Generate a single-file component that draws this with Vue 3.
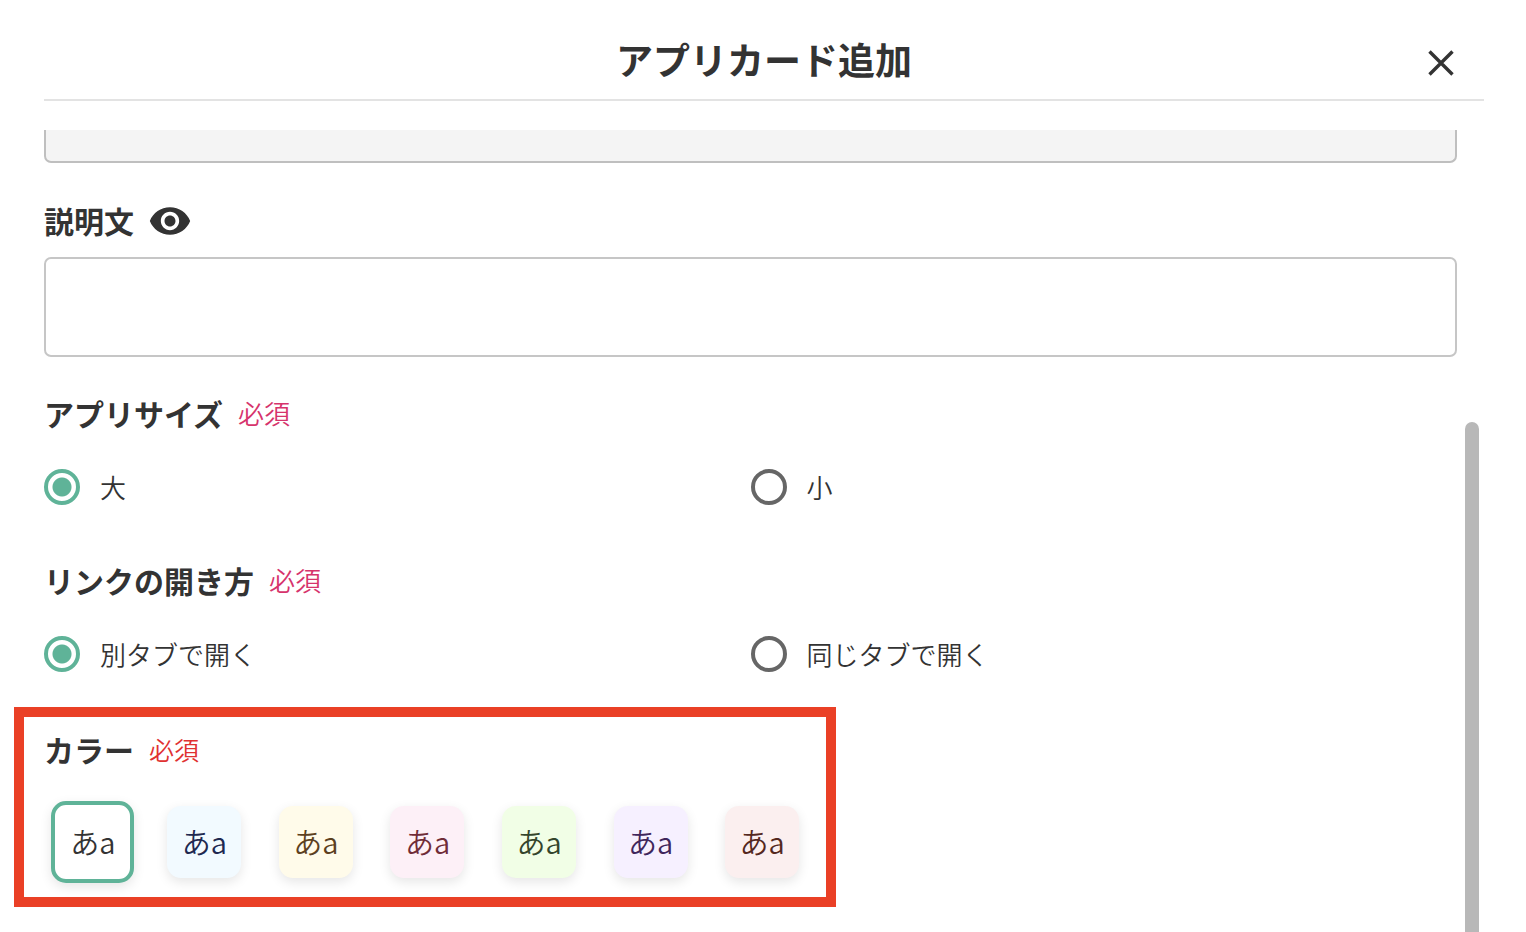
<script setup>
import { ref } from 'vue'

const description = ref('')
const size = ref('large')
const target = ref('new')
const color = ref('white')

const sizes = [
  { value: 'large', label: '大' },
  { value: 'small', label: '小' },
]
const targets = [
  { value: 'new', label: '別タブで開く' },
  { value: 'same', label: '同じタブで開く' },
]
const colors = ['white', 'blue', 'yellow', 'pink', 'green', 'purple', 'red']
</script>

<template>
  <main class="dialog">
    <header class="header">
      <h1 class="title">アプリカード追加</h1>
      <button class="close" type="button" aria-label="閉じる">
        <svg viewBox="0 0 26 26" width="26" height="26" aria-hidden="true">
          <path d="M1.5 1.5 24.5 24.5M24.5 1.5 1.5 24.5" fill="none" stroke="#333" stroke-width="3.400" />
        </svg>
      </button>
    </header>

    <div class="body">
      <form class="form" @submit.prevent>
        <input class="cut-field" type="text" disabled aria-label="アプリ名" />

        <div class="field">
          <div class="heading">
            <label for="description">説明文</label>
            <svg class="eye" viewBox="0 0 24 24" aria-hidden="true">
              <path
                fill="#333"
                d="M12 4.500C7 4.500 2.730 7.610 1 12c1.730 4.390 6 7.500 11 7.500s9.270-3.110 11-7.500c-1.730-4.390-6-7.500-11-7.500zM12 17c-2.760 0-5-2.240-5-5s2.240-5 5-5 5 2.240 5 5-2.240 5-5 5zm0-8c-1.660 0-3 1.340-3 3s1.340 3 3 3 3-1.340 3-3-1.340-3-3-3z"
              />
            </svg>
          </div>
          <textarea id="description" v-model="description" class="textarea"></textarea>
        </div>

        <fieldset class="group group-size">
          <legend class="heading">アプリサイズ<span class="required">必須</span></legend>
          <div class="options">
            <label v-for="o in sizes" :key="o.value" class="option">
              <input v-model="size" class="radio" type="radio" name="size" :value="o.value" />
              <span>{{ o.label }}</span>
            </label>
          </div>
        </fieldset>

        <fieldset class="group group-target">
          <legend class="heading">リンクの開き方<span class="required">必須</span></legend>
          <div class="options">
            <label v-for="o in targets" :key="o.value" class="option">
              <input v-model="target" class="radio" type="radio" name="target" :value="o.value" />
              <span>{{ o.label }}</span>
            </label>
          </div>
        </fieldset>

        <div class="highlight">
          <fieldset class="group">
            <legend class="heading color-heading">カラー<span class="required vivid">必須</span></legend>
            <div class="swatches">
              <label v-for="c in colors" :key="c" class="swatch" :class="[c, { selected: color === c }]">
                <input v-model="color" class="hidden-radio" type="radio" name="color" :value="c" />
                <span>あa</span>
              </label>
            </div>
          </fieldset>
        </div>
      </form>

      <div class="scrollbar" aria-hidden="true"><div class="thumb"></div></div>
    </div>
  </main>
</template>

<style>
body {
  background: #fff;
}
</style>

<style scoped>
.dialog {
  box-sizing: border-box;
  display: flex;
  flex-direction: column;
  height: 100vh;
  overflow: hidden;
  color: #333;
  font-family: "Noto Sans CJK JP", sans-serif;
}
.header {
  display: grid;
  grid-template-columns: 56px 1fr 56px;
  align-items: center;
  box-sizing: border-box;
  height: 101px;
  margin: 0 42px 0 44px;
  padding-top: 18px;
  border-bottom: 2px solid #e3e3e3;
  flex: none;
}
.title {
  grid-column: 2;
  margin: 0;
  font-size: 37px;
  line-height: 48px;
  font-weight: 700;
  text-align: center;
}
.close {
  display: flex;
  margin: 8px 0 0;
  padding: 0;
  border: 0;
  background: none;
  cursor: pointer;
}
.body {
  display: flex;
  flex: 1;
  min-height: 0;
  margin-top: 29px;
  padding: 0 47px 0 14px;
  overflow: hidden;
}
.form {
  flex: 1;
  min-width: 0;
  padding-left: 30px;
}
.cut-field {
  display: block;
  box-sizing: border-box;
  width: 100%;
  height: 33px;
  border: 2px solid #bfbfbf;
  border-top: 0;
  border-radius: 0 0 7px 7px;
  background: #f4f4f4;
}
.field {
  margin-top: 38px;
}
.heading {
  display: flex;
  align-items: center;
  height: 40px;
  padding: 0;
  font-size: 30px;
  line-height: 38px;
  font-weight: 700;
}
.heading label {
  padding-bottom: 2px;
}
.eye {
  width: 44px;
  height: 44px;
  margin-left: 14px;
}
.textarea {
  display: block;
  box-sizing: border-box;
  width: 100%;
  height: 100px;
  margin: 16px 0 0;
  padding: 12px;
  border: 2px solid #c6c6c6;
  border-radius: 7px;
  background: #fff;
  font: inherit;
  font-size: 26px;
  resize: none;
}
.group {
  min-width: 0;
  margin: 0;
  padding: 0;
  border: 0;
}
.group-size {
  margin-top: 36px;
}
.group-target {
  margin-top: 55px;
}
.required {
  margin-left: 15px;
  color: #d6336c;
  font-size: 26px;
  font-weight: 350;
}
.vivid {
  color: #e03131;
  font-size: 25px;
}
.options {
  display: grid;
  grid-template-columns: 1fr 1fr;
  margin-top: 36px;
}
.option {
  display: flex;
  align-items: center;
  gap: 20px;
  height: 36px;
  font-size: 26px;
  font-weight: 350;
  line-height: 36px;
}
.radio {
  appearance: none;
  box-sizing: border-box;
  width: 36px;
  height: 36px;
  margin: 0;
  border: 4px solid #666;
  border-radius: 50%;
  background: #fff;
}
.radio:checked {
  border-color: #5fb398;
  background: radial-gradient(circle, #5fb398 0 9px, #fff 10px);
}
.highlight {
  box-sizing: border-box;
  width: fit-content;
  margin: 35px 0 0 -30px;
  padding: 12px 8px 14px 13px;
  border: 10px solid #ea4026;
}
.color-heading {
  padding-left: 7px;
}
.swatches {
  display: grid;
  grid-template-columns: repeat(7, 1fr);
  place-items: center;
  width: 781px;
  height: 82px;
  margin-top: 32px;
}
.swatch {
  position: relative;
  display: flex;
  align-items: center;
  justify-content: center;
  box-sizing: border-box;
  width: 74px;
  height: 72px;
  padding-bottom: 2px;
  border-radius: 14px;
  box-shadow: 0 4px 12px rgba(0, 0, 0, 0.1);
  font-size: 29px;
  line-height: 36px;
  font-weight: 350;
}
.selected {
  width: 83px;
  height: 82px;
  border: 4px solid #5fb398;
  border-radius: 15px;
}
.hidden-radio {
  position: absolute;
  opacity: 0;
  margin: 0;
}
.white { background: #fff; color: #333; }
.blue { background: #f2faff; color: #202850; }
.yellow { background: #fffbea; color: #5c4020; }
.pink { background: #fdf0f7; color: #702c38; }
.green { background: #f1fee6; color: #34452c; }
.purple { background: #f6f0ff; color: #40265c; }
.red { background: #fbefef; color: #54281e; }
.scrollbar {
  display: flex;
  width: 14px;
  margin-left: 8px;
  padding-top: 292px;
}
.thumb {
  flex: 1;
  border-radius: 7px 7px 0 0;
  background: #b8b8b8;
}
</style>
